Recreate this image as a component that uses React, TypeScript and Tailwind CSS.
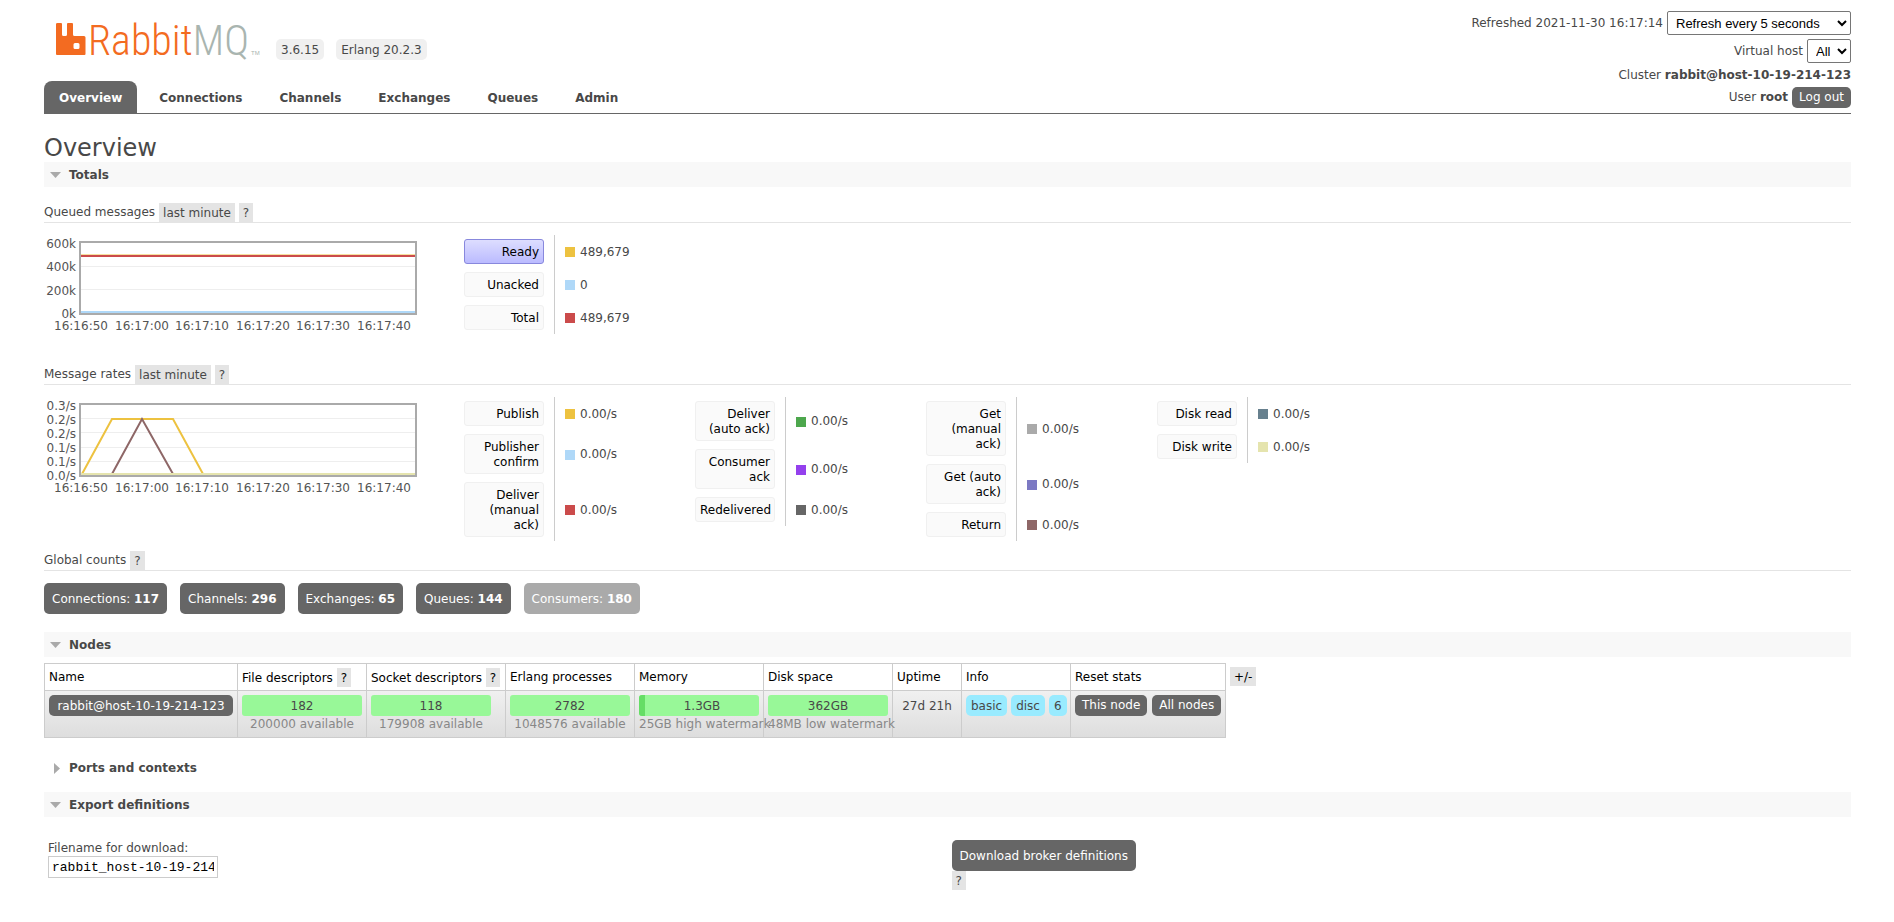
import type { ReactNode } from "react";

type Stat = { label: string; value: string; swatch: string; active?: boolean };

const tabs = ["Connections", "Channels", "Exchanges", "Queues", "Admin"];

const queued: Stat[] = [
  { label: "Ready", value: "489,679", swatch: "bg-[#edc240]", active: true },
  { label: "Unacked", value: "0", swatch: "bg-[#afd8f8]" },
  { label: "Total", value: "489,679", swatch: "bg-[#cb4b4b]" },
];

const rates: Stat[][] = [
  [
    { label: "Publish", value: "0.00/s", swatch: "bg-[#edc240]" },
    { label: "Publisher confirm", value: "0.00/s", swatch: "bg-[#afd8f8]" },
    { label: "Deliver (manual ack)", value: "0.00/s", swatch: "bg-[#cb4b4b]" },
  ],
  [
    { label: "Deliver (auto ack)", value: "0.00/s", swatch: "bg-[#4da74d]" },
    { label: "Consumer ack", value: "0.00/s", swatch: "bg-[#9440ed]" },
    { label: "Redelivered", value: "0.00/s", swatch: "bg-[#666666]" },
  ],
  [
    { label: "Get (manual ack)", value: "0.00/s", swatch: "bg-[#aaaaaa]" },
    { label: "Get (auto ack)", value: "0.00/s", swatch: "bg-[#7c79c3]" },
    { label: "Return", value: "0.00/s", swatch: "bg-[#8e6767]" },
  ],
  [
    { label: "Disk read", value: "0.00/s", swatch: "bg-[#67808e]" },
    { label: "Disk write", value: "0.00/s", swatch: "bg-[#e5e4ae]" },
  ],
];

const counts = [
  { label: "Connections", value: 117 },
  { label: "Channels", value: 296 },
  { label: "Exchanges", value: 65 },
  { label: "Queues", value: 144 },
  { label: "Consumers", value: 180, disabled: true },
];

const times = ["16:16:50", "16:17:00", "16:17:10", "16:17:20", "16:17:30", "16:17:40"];

function Logo() {
  return (
    <svg width="206" height="56" viewBox="0 0 206 56" role="img" aria-label="RabbitMQ" className="overflow-visible">
      <path
        fill="#f36b21"
        fillRule="evenodd"
        d="M1.500 10H5Q6 10 6 11V21.500Q6 23 7.500 23H9.500Q11 23 11 21.500V11Q11 10 12 10H16Q17 10 17 11V21.500Q17 23 18.500 23H28Q29.500 23 29.500 24.500V41Q29.500 42 28.500 42H1Q0 42 0 41V11Q0 10 1.500 10ZM19 30Q17.500 30 17.500 31.500V34.500Q17.500 36 19 36H22Q23.500 36 23.500 34.500V31.500Q23.500 30 22 30Z"
      />
      <text
        x="32"
        y="42"
        fontSize="42"
        fontWeight="300"
        fill="#f36b21"
        fontFamily="'Roboto Condensed', 'Open Sans Condensed', 'Noto Sans ExtraCondensed', 'Noto Sans Condensed', Lato, sans-serif"
      >
        Rabbit
        <tspan fill="#a9b5b0">MQ</tspan>
      </text>
      <text x="195" y="42" fontSize="6" fill="#a9b5b0" fontFamily="'Liberation Sans', sans-serif">
        TM
      </text>
    </svg>
  );
}

function Tag({ children }: { children: ReactNode }) {
  return (
    <button type="button" className="h-[19px] shrink-0 bg-[#e4e4e4] px-1 text-xs leading-[21px]">
      {children}
    </button>
  );
}

function SectionHeader({ title, open = true }: { title: string; open?: boolean }) {
  return (
    <h2 className={open ? "bg-[#f8f8f8] font-bold" : "font-bold"}>
      <button type="button" aria-expanded={open} className="flex h-[25px] w-full items-center gap-2 pl-[6px] pt-0.5 text-left">
        <svg width="11" height="11" viewBox="0 0 11 11" fill="#aaa" aria-hidden="true">
          {open ? <path d="M0 2H11L5.500 8Z" /> : <path d="M4 0V11L10 5.500Z" />}
        </svg>
        {title}
      </button>
    </h2>
  );
}

function SubHeader({ title, range }: { title: string; range?: string }) {
  return (
    <h3 className="flex h-5 items-center gap-1 border-b border-[#e4e4e4] leading-[21px]">
      {title}
      {range && <Tag>{range}</Tag>}
      <Tag>?</Tag>
    </h3>
  );
}

function Legend({ stats }: { stats: Stat[] }) {
  return (
    <div className="w-[231px] shrink-0">
      <table className="border-collapse">
        <tbody>
          {stats.map((s) => (
            <tr key={s.label}>
              <th className="py-1 pr-[10px] font-normal">
                <button
                  type="button"
                  className={
                    s.active
                      ? "block w-20 rounded-[3px] border border-[#8888dd] bg-linear-to-b from-[#ddddff] to-[#bbbbff] px-1 pb-[3px] pt-[5px] text-right leading-[15px] text-black"
                      : "block w-20 rounded-[3px] border border-[#f0f0f0] bg-[#fafafa] px-1 pb-[3px] pt-[5px] text-right leading-[15px] text-black"
                  }
                >
                  {s.label}
                </button>
              </th>
              <td className="border-l border-[#ccc] pl-[10px] pt-px">
                <div className="flex items-center gap-[5px]">
                  <span className={`size-[10px] ${s.swatch}`} />
                  {s.value}
                </div>
              </td>
            </tr>
          ))}
        </tbody>
      </table>
    </div>
  );
}

function Chart({ title, labels, grid, children }: { title: string; labels: string[]; grid: number[]; children: ReactNode }) {
  const step = 70 / (labels.length - 1);
  return (
    <div className="w-[420px] shrink-0">
      <svg width="400" height="100" viewBox="0 0 400 100" role="img" aria-label={title}>
        <g stroke="#eee">
          {grid.map((y) => (
            <path key={y} d={`M37 ${y}H371`} />
          ))}
        </g>
        {children}
        <rect x="36" y="7" width="336" height="72" fill="none" stroke="#aaa" strokeWidth="2" />
        <g fontSize="12" fill="#545454">
          {labels.map((l, i) => (
            <text key={i} x="32" y={13 + Math.round(i * step)} textAnchor="end">
              {l}
            </text>
          ))}
          {times.map((t, i) => (
            <text key={t} x={37 + Math.round(i * 60.6)} y="95" textAnchor="middle">
              {t}
            </text>
          ))}
        </g>
      </svg>
    </div>
  );
}

function Meter({ value, note, used }: { value: string; note: string; used?: boolean }) {
  return (
    <td className="border border-[#ccc] p-1 pb-[5px] align-top">
      <div className="flex h-[21px] w-[120px] overflow-hidden rounded-[3px] bg-[#98f898]">
        {used && <span className="w-[6px] bg-[#66dd66]" />}
        <span className="flex-1 text-center leading-[22px]">{value}</span>
      </div>
      <div className="flex w-[120px] justify-center whitespace-nowrap leading-4 text-[#888]">
        <span className="min-w-0">{note}</span>
      </div>
    </td>
  );
}

function Pill({ children }: { children: ReactNode }) {
  return <span className="h-[21px] rounded-[5px] bg-[#99ebff] px-[5px] leading-[22px]">{children}</span>;
}

const darkButton = "h-[21px] rounded-[5px] bg-[#666] px-[7px] leading-[21px] text-white";
const cell = "border border-[#ccc] px-1";

export default function App() {
  return (
    <div className="min-h-screen bg-white pb-8 pl-11 pr-[43px] font-['Verdana','DejaVu_Sans',sans-serif] text-xs leading-[15px] text-[#484848]">
      <header className="flex items-end justify-between border-b border-[#666]">
        <div>
          <div className="flex h-[81px] items-start pl-3 pt-[13px]">
            <a href="#/">
              <Logo />
            </a>
            <div className="ml-[14px] mt-[26px] flex gap-3 leading-[22px]">
              <span className="h-[21px] rounded-[5px] bg-[#f0f0f0] px-[5px]">3.6.15</span>
              <span className="h-[21px] rounded-[5px] bg-[#f0f0f0] px-[5px]">Erlang 20.2.3</span>
            </div>
          </div>
          <nav className="flex h-8 gap-[7px] font-bold leading-[34px]">
            <a href="#/" className="rounded-t-lg bg-[#666] px-[15px] text-white">
              Overview
            </a>
            {tabs.map((t) => (
              <a key={t} href={`#/${t.toLowerCase()}`} className="px-[15px]">
                {t}
              </a>
            ))}
          </nav>
        </div>

        <div className="flex flex-col items-end gap-1 pb-[5px]">
          <label className="flex items-center gap-1">
            Refreshed 2021-11-30 16:17:14
            <select className="h-6 w-[184px] rounded-[2px] border border-[#767676] bg-white px-1 font-['Liberation_Sans',Arial,sans-serif] text-[13px] text-black">
              <option>Refresh every 5 seconds</option>
            </select>
          </label>
          <label className="flex items-center gap-1">
            Virtual host
            <select className="h-6 w-11 rounded-[2px] border border-[#767676] bg-white px-1 font-['Liberation_Sans',Arial,sans-serif] text-[13px] text-black">
              <option>All</option>
            </select>
          </label>
          <div className="leading-4">
            Cluster <b>rabbit@host-10-19-214-123</b>
          </div>
          <div className="flex items-center gap-1">
            <span>
              User <b>root</b>
            </span>
            <button type="button" className={darkButton}>
              Log out
            </button>
          </div>
        </div>
      </header>

      <main>
        <h1 className="mt-5 text-2xl leading-7">Overview</h1>
        <SectionHeader title="Totals" />

        <div className="mt-4">
          <SubHeader title="Queued messages" range="last minute" />
          <div className="mb-[10px] mt-3 flex min-h-[120px] items-start">
            <Chart title="Queued messages" labels={["600k", "400k", "200k", "0k"]} grid={[31.5, 54.5]}>
              <path d="M37 19.500H371" stroke="#edc240" strokeOpacity="0.5" />
              <path d="M37 21H371" stroke="#cb4b4b" strokeWidth="2" />
              <path d="M37 77H371" stroke="#afd8f8" strokeWidth="2" />
            </Chart>
            <Legend stats={queued} />
          </div>

          <SubHeader title="Message rates" range="last minute" />
          <div className="mb-[10px] mt-3 flex min-h-[120px] items-start">
            <Chart
              title="Message rates"
              labels={["0.3/s", "0.2/s", "0.2/s", "0.1/s", "0.1/s", "0.0/s"]}
              grid={[21.5, 35.5, 50.5, 64.5]}
            >
              <path d="M38 77L68 22H129L159 77" fill="none" stroke="#edc240" strokeWidth="2" />
              <path d="M68 77L98 22L129 77" fill="none" stroke="#8e6767" strokeWidth="2" />
              <path d="M37 77H371" stroke="#e5e4ae" strokeWidth="2" />
            </Chart>
            {rates.map((group, i) => (
              <Legend key={i} stats={group} />
            ))}
          </div>

          <SubHeader title="Global counts" />
          <div className="mb-[18px] mt-3 flex gap-[13px]">
            {counts.map((c) => (
              <a
                key={c.label}
                href={`#/${c.label.toLowerCase()}`}
                className={
                  c.disabled
                    ? "h-[31px] rounded-[5px] bg-[#aaa] px-2 leading-8 text-white"
                    : "h-[31px] rounded-[5px] bg-[#666] px-2 leading-8 text-white"
                }
              >
                {c.label}: <b>{c.value}</b>
              </a>
            ))}
          </div>
        </div>

        <SectionHeader title="Nodes" />
        <div className="mb-[17px] mt-[6px] flex items-start gap-1">
          <table className="w-[1182px] table-fixed border-collapse">
            <thead className="text-left text-black">
              <tr className="h-[27px] [&>th]:font-normal">
                <th className={`${cell} w-[193px]`}>Name</th>
                <th className={`${cell} w-[129px] whitespace-nowrap`}>
                  File descriptors <Tag>?</Tag>
                </th>
                <th className={`${cell} w-[139px] whitespace-nowrap`}>
                  Socket descriptors <Tag>?</Tag>
                </th>
                <th className={`${cell} w-[129px]`}>Erlang processes</th>
                <th className={`${cell} w-[129px]`}>Memory</th>
                <th className={`${cell} w-[129px]`}>Disk space</th>
                <th className={`${cell} w-[69px]`}>Uptime</th>
                <th className={`${cell} w-[109px]`}>Info</th>
                <th className={cell}>Reset stats</th>
              </tr>
            </thead>
            <tbody>
              <tr className="bg-linear-to-b from-[#f0f0f0] to-[#dddddd] align-top">
                <td className={`${cell} py-1`}>
                  <a href="#/nodes/rabbit" className="flex h-[21px] justify-center rounded-[5px] bg-[#666] leading-[22px] text-white">
                    rabbit@host-10-19-214-123
                  </a>
                </td>
                <Meter value="182" note="200000 available" />
                <Meter value="118" note="179908 available" />
                <Meter value="2782" note="1048576 available" />
                <Meter value="1.3GB" note="25GB high watermark" used />
                <Meter value="362GB" note="48MB low watermark" />
                <td className={`${cell} py-1 text-center leading-[22px]`}>27d 21h</td>
                <td className={`${cell} py-1`}>
                  <div className="flex gap-1">
                    <Pill>basic</Pill>
                    <Pill>disc</Pill>
                    <Pill>6</Pill>
                  </div>
                </td>
                <td className={`${cell} py-1`}>
                  <div className="flex gap-[5px] whitespace-nowrap">
                    <button type="button" className={darkButton}>
                      This node
                    </button>
                    <button type="button" className={darkButton}>
                      All nodes
                    </button>
                  </div>
                </td>
              </tr>
            </tbody>
          </table>
          <div className="mt-1 text-black">
            <Tag>+/-</Tag>
          </div>
        </div>

        <SectionHeader title="Ports and contexts" open={false} />
        <div className="mt-3">
          <SectionHeader title="Export definitions" />
        </div>
        <form className="mt-[23px] grid grid-cols-2 px-1">
          <div>
            <label htmlFor="filename" className="block leading-4">
              Filename for download:
            </label>
            <input
              id="filename"
              type="text"
              defaultValue="rabbit_host-10-19-214-123_2021-11-30.json"
              className="h-[22px] w-[170px] border border-[#ccc] px-[3px] font-['Liberation_Mono','Courier_New',monospace] text-[13px] text-black"
            />
          </div>
          <div className="flex flex-col items-start pl-1">
            <button type="button" className="h-[31px] rounded-[5px] bg-[#666] px-2 leading-8 text-white">
              Download broker definitions
            </button>
            <Tag>?</Tag>
          </div>
        </form>
      </main>
    </div>
  );
}
